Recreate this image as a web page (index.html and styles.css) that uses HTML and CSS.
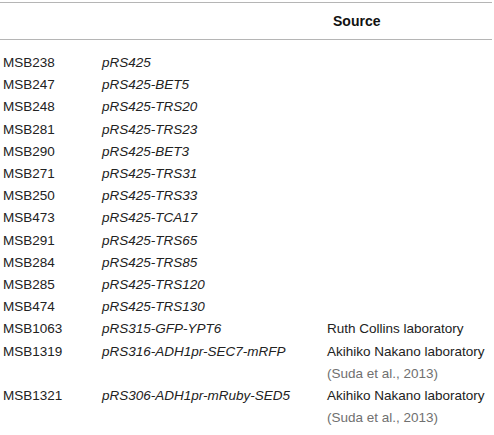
FILE: index.html
```html
<!DOCTYPE html>
<html>
<head>
<meta charset="utf-8">
<link rel="stylesheet" href="styles.css">
</head>
<body>
<table class="strains">
  <colgroup>
    <col class="c1"><col class="c2"><col class="c3">
  </colgroup>
  <thead>
    <tr><th></th><th></th><th class="src">Source</th></tr>
  </thead>
  <tbody>
    <tr class="first"><td>MSB238</td><td class="pl">pRS425</td><td></td></tr>
    <tr><td>MSB247</td><td class="pl">pRS425-BET5</td><td></td></tr>
    <tr><td>MSB248</td><td class="pl">pRS425-TRS20</td><td></td></tr>
    <tr><td>MSB281</td><td class="pl">pRS425-TRS23</td><td></td></tr>
    <tr><td>MSB290</td><td class="pl">pRS425-BET3</td><td></td></tr>
    <tr><td>MSB271</td><td class="pl">pRS425-TRS31</td><td></td></tr>
    <tr><td>MSB250</td><td class="pl">pRS425-TRS33</td><td></td></tr>
    <tr><td>MSB473</td><td class="pl">pRS425-TCA17</td><td></td></tr>
    <tr><td>MSB291</td><td class="pl">pRS425-TRS65</td><td></td></tr>
    <tr><td>MSB284</td><td class="pl">pRS425-TRS85</td><td></td></tr>
    <tr><td>MSB285</td><td class="pl">pRS425-TRS120</td><td></td></tr>
    <tr><td>MSB474</td><td class="pl">pRS425-TRS130</td><td></td></tr>
    <tr><td>MSB1063</td><td class="pl">pRS315-GFP-YPT6</td><td>Ruth Collins laboratory</td></tr>
    <tr><td>MSB1319</td><td class="pl">pRS316-ADH1pr-SEC7-mRFP</td><td>Akihiko Nakano laboratory<br><span class="cite">(Suda et al., 2013)</span></td></tr>
    <tr><td>MSB1321</td><td class="pl">pRS306-ADH1pr-mRuby-SED5</td><td>Akihiko Nakano laboratory<br><span class="cite">(Suda et al., 2013)</span></td></tr>
  </tbody>
</table>
</body>
</html>
```
FILE: styles.css
```css
html, body {
  margin: 0;
  padding: 0;
  background: #ffffff;
}
body {
  font-family: "Liberation Sans", Arial, sans-serif;
  font-size: 13.5px;
  color: #222222;
}
.strains {
  border-collapse: collapse;
  width: 492px;
  margin-top: 2px;
  table-layout: fixed;
}
.c1 { width: 99px; }
.c2 { width: 225px; }
.c3 { width: 168px; }
.strains thead tr {
  border-top: 1.5px solid #b5b5b5;
  border-bottom: 1.5px solid #b5b5b5;
}
.strains th {
  height: 36px;
  padding: 0;
  font-size: 14px;
  font-weight: bold;
  text-align: left;
  color: #111111;
}
.strains th.src {
  padding-left: 9px;
}
.strains td {
  padding: 0 0 0 3px;
  line-height: 22.2px;
  vertical-align: top;
  white-space: nowrap;
}
.strains tr.first td {
  padding-top: 12px;
}
.pl {
  font-style: italic;
}
.cite {
  color: #707070;
}
```
